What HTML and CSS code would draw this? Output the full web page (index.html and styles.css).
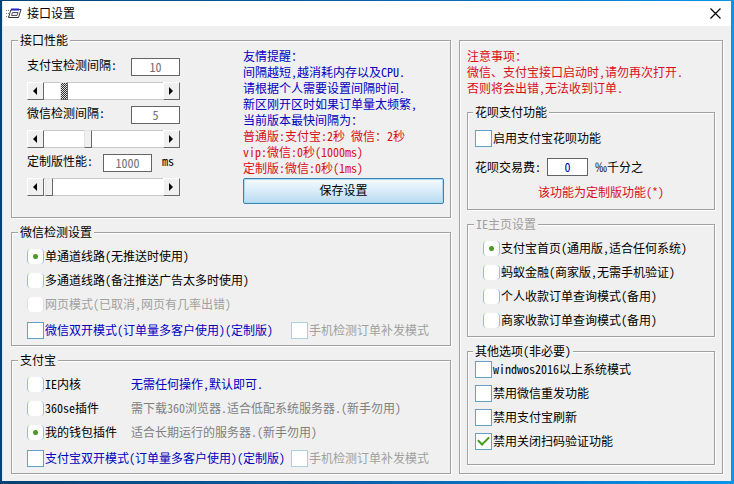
FILE: index.html
```html
<!DOCTYPE html>
<html lang="zh-CN">
<head>
    <meta charset="UTF-8">
    <title>接口设置</title>
    <link rel="stylesheet" href="styles.css">
</head>
<body>
<div class="window">
    <header class="titlebar">
        <svg class="app-icon" width="16" height="12" viewBox="0 0 16 12">
            <path d="M0 2.5h5M0 5.5h4M0 8.5h3" stroke="#888" stroke-dasharray="1 1"/>
            <path d="M5 1.5h10L12.500 9.500H2.500z" fill="#fff" stroke="#334"/>
            <path d="M5 1.500h8" stroke="#2020c0" stroke-width="2"/>
            <path d="M6.500 4.500h5.500L11 7.500H5.500z" fill="#eee" stroke="#556"/>
        </svg>
        <h1>接口设置</h1>
        <button type="button" class="close" aria-label="关闭">
            <svg width="11" height="11" viewBox="0 0 11 11"><path d="M0.500 0.500l10 10M10.500 0.500l-10 10" stroke="#000" stroke-width="1.200"/></svg>
        </button>
    </header>

    <form class="main" id="f">
        <div class="left">
            <fieldset class="perf">
                <legend>接口性能</legend>
                <div class="speeds">
                    <div class="line">
                        <label for="ali">支付宝检测间隔:</label>
                        <input type="text" class="num" id="ali" value="10">
                    </div>
                    <div class="scroll">
                        <button type="button" class="arrow prev" aria-label="减少"></button>
                        <input type="range" class="active" min="0" max="100" value="14" aria-label="支付宝检测间隔">
                        <button type="button" class="arrow next" aria-label="增加"></button>
                    </div>
                    <div class="line">
                        <label for="wx">微信检测间隔:</label>
                        <input type="text" class="num" id="wx" value="5">
                    </div>
                    <div class="scroll">
                        <button type="button" class="arrow prev" aria-label="减少"></button>
                        <input type="range" min="0" max="100" value="36" aria-label="微信检测间隔">
                        <button type="button" class="arrow next" aria-label="增加"></button>
                    </div>
                    <div class="line">
                        <label for="vip">定制版性能:</label>
                        <input type="text" class="num" id="vip" value="1000">
                        <span class="unit">ms</span>
                    </div>
                    <div class="scroll">
                        <button type="button" class="arrow prev" aria-label="减少"></button>
                        <input type="range" min="0" max="100" value="1" aria-label="定制版性能">
                        <button type="button" class="arrow next" aria-label="增加"></button>
                    </div>
                </div>
                <div class="tips">
                    <p class="blue">友情提醒：<br>间隔越短,越消耗内存以及CPU.<br>请根据个人需要设置间隔时间.<br>新区刚开区时如果订单量太频繁,<br>当前版本最快间隔为：</p>
                    <p class="red">普通版:支付宝:2秒 微信：2秒<br>vip:微信:0秒(1000ms)<br>定制版:微信:0秒(1ms)</p>
                    <button type="button" class="save">保存设置</button>
                </div>
            </fieldset>

            <fieldset class="group">
                <legend>微信检测设置</legend>
                <label class="opt"><input type="radio" name="wxline" checked>单通道线路(无推送时使用)</label>
                <label class="opt"><input type="radio" name="wxline">多通道线路(备注推送广告太多时使用)</label>
                <label class="opt off"><input type="radio" name="wxline" disabled>网页模式(已取消,网页有几率出错)</label>
                <div class="checks">
                    <label class="opt blue"><input type="checkbox">微信双开模式(订单量多客户使用)(定制版)</label>
                    <label class="opt off"><input type="checkbox" disabled>手机检测订单补发模式</label>
                </div>
            </fieldset>

            <fieldset class="group">
                <legend>支付宝</legend>
                <div class="choice">
                    <label class="opt"><input type="radio" name="core">IE内核</label>
                    <span class="blue">无需任何操作,默认即可.</span>
                </div>
                <div class="choice">
                    <label class="opt"><input type="radio" name="core">360se插件</label>
                    <span class="gray">需下载360浏览器.适合低配系统服务器.(新手勿用)</span>
                </div>
                <div class="choice">
                    <label class="opt"><input type="radio" name="core" checked>我的钱包插件</label>
                    <span class="gray">适合长期运行的服务器.(新手勿用)</span>
                </div>
                <div class="checks">
                    <label class="opt blue"><input type="checkbox">支付宝双开模式(订单量多客户使用)(定制版)</label>
                    <label class="opt off"><input type="checkbox" disabled>手机检测订单补发模式</label>
                </div>
            </fieldset>
        </div>

        <div class="right">
            <p class="red">注意事项：<br>微信、支付宝接口启动时,请勿再次打开.<br>否则将会出错,无法收到订单.</p>

            <fieldset class="huabei">
                <legend>花呗支付功能</legend>
                <label class="opt"><input type="checkbox">启用支付宝花呗功能</label>
                <div class="fee">
                    <label for="fee">花呗交易费:</label>
                    <input type="text" class="num" id="fee" value="0">
                    <span>‰千分之</span>
                </div>
                <p class="red">该功能为定制版功能(*)</p>
            </fieldset>

            <fieldset class="home">
                <legend class="off">IE主页设置</legend>
                <label class="opt"><input type="radio" name="home" checked>支付宝首页(通用版,适合任何系统)</label>
                <label class="opt"><input type="radio" name="home">蚂蚁金融(商家版,无需手机验证)</label>
                <label class="opt"><input type="radio" name="home">个人收款订单查询模式(备用)</label>
                <label class="opt"><input type="radio" name="home">商家收款订单查询模式(备用)</label>
            </fieldset>

            <fieldset class="other">
                <legend>其他选项(非必要)</legend>
                <label class="opt"><input type="checkbox">windwos2016以上系统模式</label>
                <label class="opt"><input type="checkbox">禁用微信重发功能</label>
                <label class="opt"><input type="checkbox">禁用支付宝刷新</label>
                <label class="opt"><input type="checkbox" checked>禁用关闭扫码验证功能</label>
            </fieldset>
        </div>
    </form>
</div>
</body>
</html>
```
FILE: styles.css
```css
* { box-sizing: border-box; }
body {
    margin: 0;
    padding: 1px 3px 3px 2px;
    min-height: 100vh;
    display: flex;
    background: linear-gradient(to right, #064273, #0a62ad 50%, #0a94ea);
    color: #000;
    white-space: nowrap;
}
body, input, button {
    font-family: "Noto Sans CJK SC", sans-serif;
    font-size: 12px;
    line-height: 16px;
    font-feature-settings: "hwid"; /* half-width latin, like a console font */
}
p, h1 { margin: 0; }
.window {
    flex: 1;
    background: #f0f0f0;
    border-left: 1px solid #d8ecf8;
}
.titlebar {
    display: flex;
    align-items: center;
    height: 25px;
    padding: 0 10px 0 3px;
    background: #fff;
}
.titlebar h1 {
    flex: 1;
    margin-left: 5px;
    padding-bottom: 2px;
    font-size: 12px;
    font-weight: normal;
}
.close {
    display: flex;
    padding: 0;
    border: none;
    background: none;
}
.main {
    display: grid;
    grid-template-columns: 5fr 3fr;
    gap: 8px;
    padding: 6px 8px 7px;
}
.left {
    display: flex;
    flex-direction: column;
    gap: 6px;
}

/* etched group boxes */
fieldset {
    min-width: 0;
    margin: 0;
    padding: 0;
    border: 1px solid #a0a0a0;
    box-shadow: inset 1px 1px #fff, 1px 1px #fff;
}
legend {
    margin-left: -9px;
    padding: 0 2px;
    background: #f0f0f0;
}
.red { color: #d80f18; }
.blue { color: #0000c0; }
.gray { color: #808080; }
.off { color: #a0a0a0; }

.perf {
    display: flex;
    padding: 0 6px 13px 15px;
}
.speeds {
    width: 153px;
    padding-top: 10px;
}
.line, .scroll {
    display: flex;
    height: 18px;
    margin-bottom: 6px;
}
.line {
    justify-content: space-between;
    line-height: 14px;
}
.num {
    width: 49px;
    height: 18px;
    padding: 0 0 2px;
    border: 1px solid #646464;
    background: #fff;
    color: #707070;
    line-height: 14px;
    text-align: center;
}
.unit { width: 18px; }
.arrow {
    width: 17px;
    padding: 0 0 0 5px;
    background: #f0f0f0;
    border: 1px solid #fff;
    border-right-color: #696969;
    border-bottom-color: #696969;
}
.arrow::before {
    content: "";
    display: block;
    width: 0;
    border: 4px solid transparent;
}
.prev { padding-left: 1px; }
.prev::before { border-right-color: #000; border-left-width: 0; margin-left: 4px; }
.next::before { border-left-color: #000; border-right-width: 0; }
input[type="range"] {
    appearance: none;
    flex: 1;
    min-width: 0;
    height: 18px;
    margin: 0;
    background: #fff;
    border-top: 1px solid #c8c8c8;
    border-bottom: 1px solid #c8c8c8;
}
input[type="range"]::-webkit-slider-thumb {
    appearance: none;
    width: 8px;
    height: 18px;
    background: #f0f0f0;
    border: 1px solid #e3e3e3;
    border-right-color: #696969;
    border-bottom-color: #696969;
}
input.active::-webkit-slider-thumb {
    background: repeating-conic-gradient(#333 0 25%, #ddd 0 50%) 0 0 / 2px 2px;
}
.tips {
    flex: 1;
    margin-left: 63px;
}
.save {
    display: block;
    width: 100%;
    height: 26px;
    margin-top: 2px;
    padding-bottom: 3px;
    border: 1px solid #3c7fb1;
    border-radius: 2px;
    background: linear-gradient(#f4fafd, #dceefa 45%, #b8daf0);
    box-shadow: inset 0 0 0 1px #a8dcf5;
}

.opt {
    display: flex;
    align-items: center;
    height: 24px;
}
.opt input {
    appearance: none;
    flex: none;
    display: grid;
    place-items: center;
    width: 17px;
    height: 17px;
    margin: 0 1px 0 0;
    background: #fff;
}
.opt input[type="checkbox"] { border: 1px solid #62a0cc; }
.opt input[type="radio"] {
    height: 15px;
    border: solid #a4b8e8;
    border-width: 0 1px;
    border-radius: 4px;
}
.opt input[type="checkbox"]:disabled { border-color: #b0cede; }
.opt input[type="radio"]:disabled { border-color: #e0e0e8; }
.opt input[type="radio"]:checked::before {
    content: "";
    width: 5px;
    height: 5px;
    border-radius: 50%;
    background: #4c9a26;
}
.opt input[type="checkbox"]:checked::before {
    content: "";
    width: 9px;
    height: 5px;
    margin-bottom: 3px;
    border: solid #3f9a1c;
    border-width: 0 0 2px 2px;
    transform: rotate(-45deg);
}
.group { padding: 4px 6px 3px 15px; }
.checks {
    display: grid;
    grid-template-columns: 264px auto;
    margin-top: 2px;
}
.choice {
    display: grid;
    grid-template-columns: 104px auto;
    align-items: center;
}

.right {
    margin-top: 8px;
    padding: 7px;
    border: 1px solid #a0a0a0;
    box-shadow: inset 1px 1px #fff, 1px 1px #fff;
}
.right fieldset { margin-top: 6px; }
.right .huabei {
    margin-top: 8px;
    padding: 6px 7px 9px;
}
.huabei legend, .other legend { margin-left: -2px; }
.fee {
    display: flex;
    align-items: center;
    height: 34px;
}
.fee .num {
    width: 41px;
    margin: 0 7px 0 6px;
    color: #0000c0;
}
.huabei .red {
    text-align: center;
    padding-left: 20px;
}
.home { padding: 4px 15px; }
.other { padding: 0 7px 11px; }
.other legend { margin-bottom: -2px; }
```
